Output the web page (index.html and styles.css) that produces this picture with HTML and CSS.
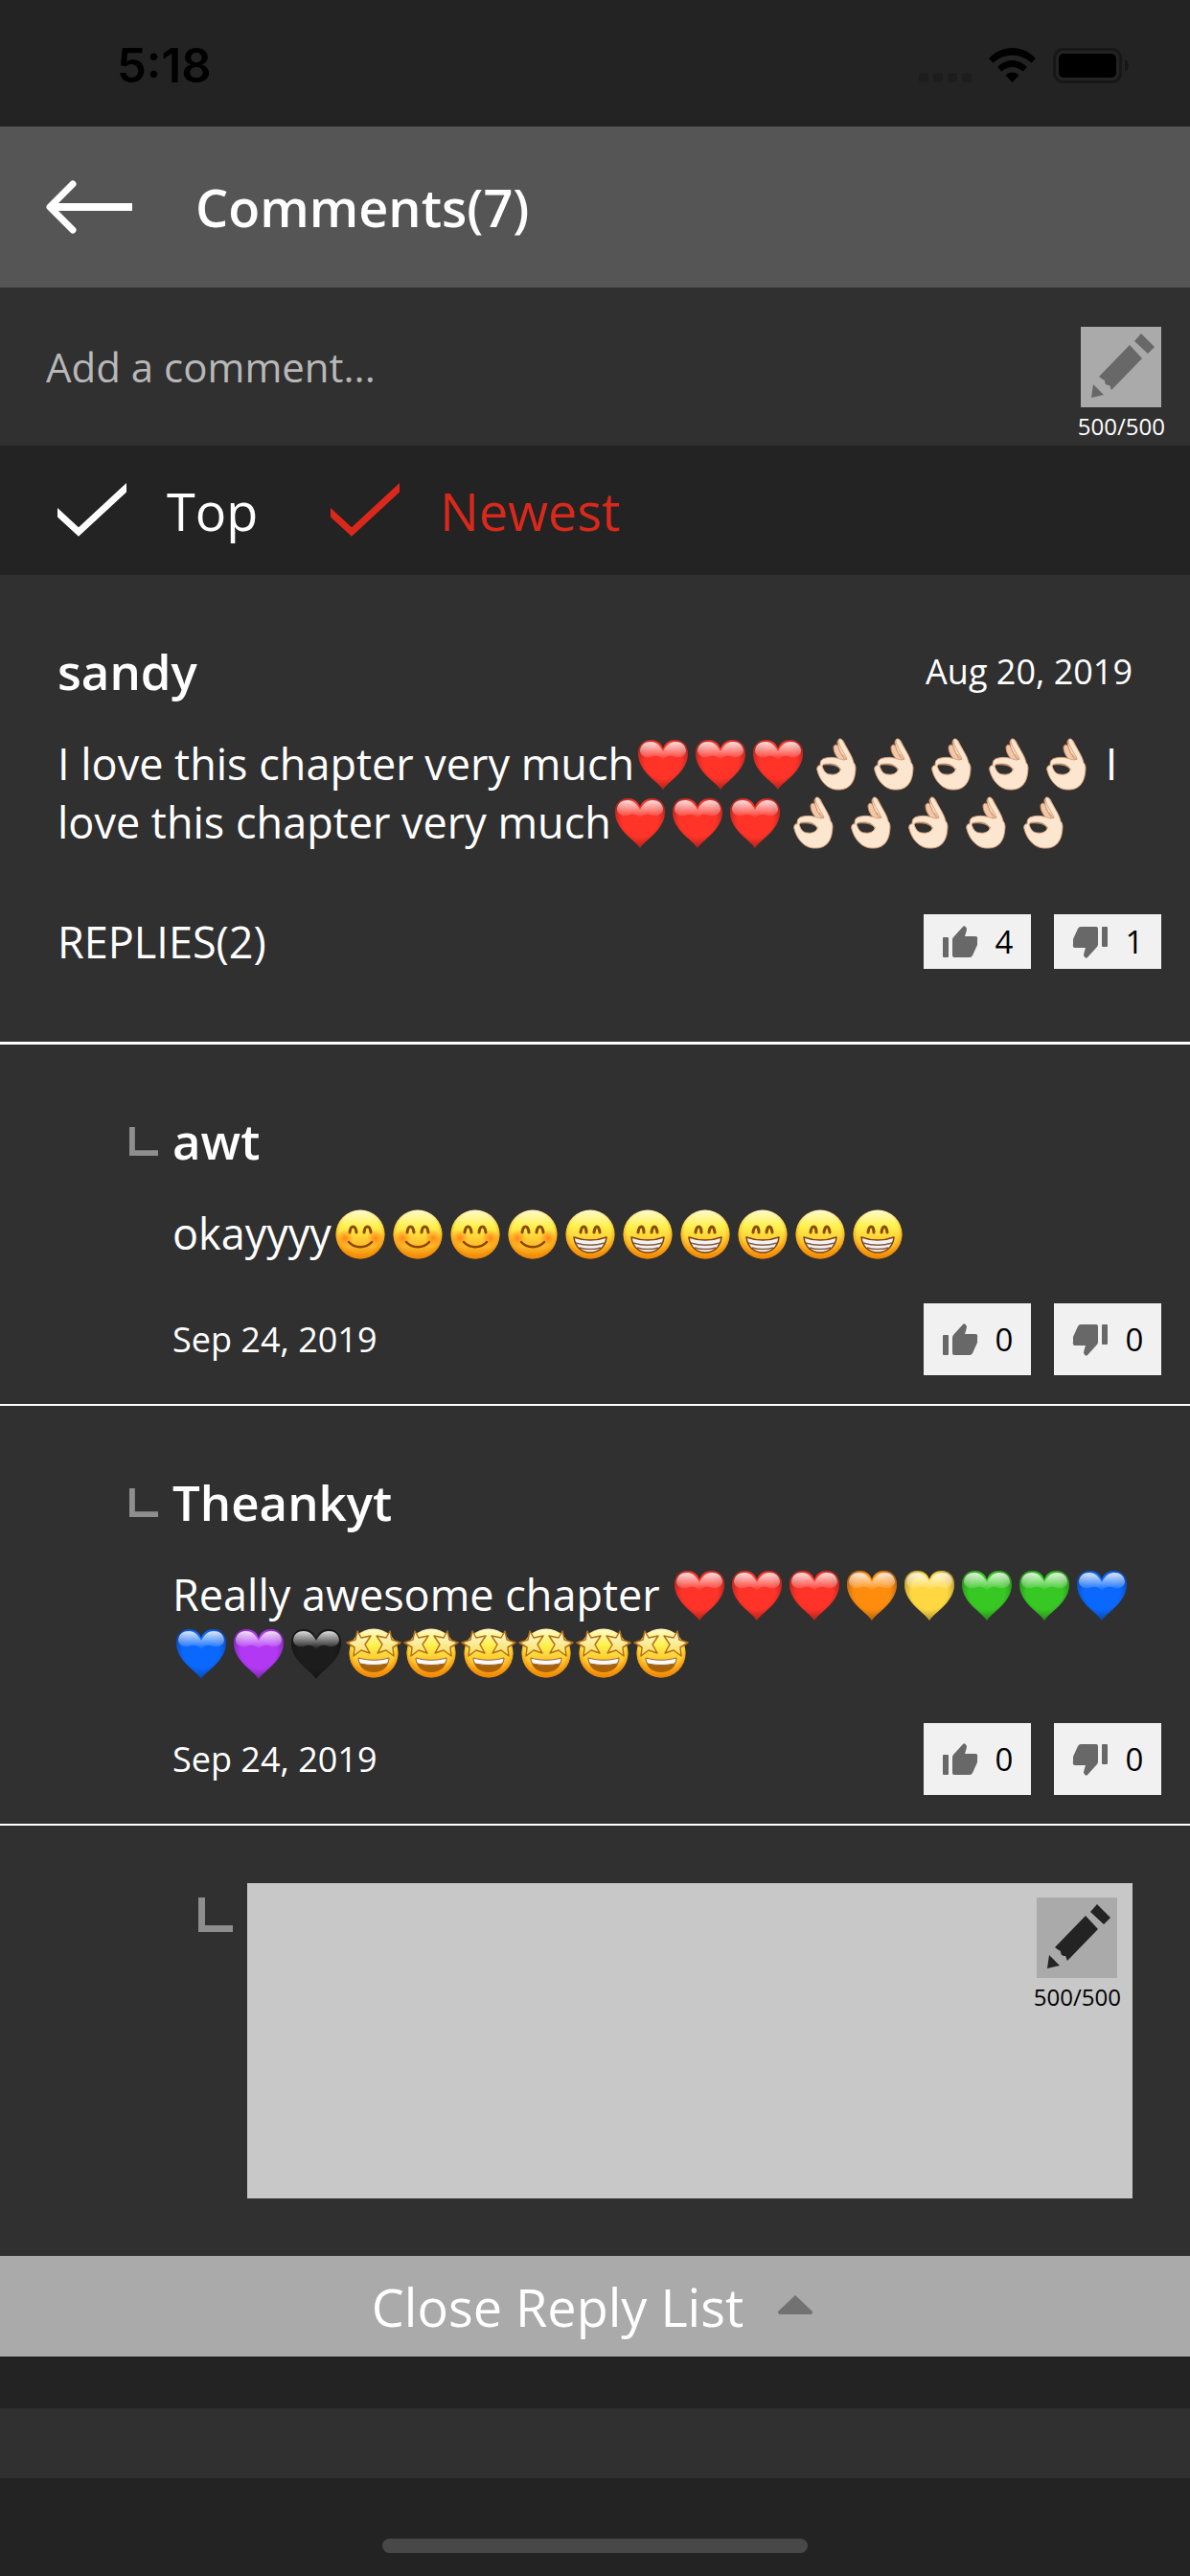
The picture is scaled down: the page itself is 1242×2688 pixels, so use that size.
FILE: index.html
```html
<!DOCTYPE html>
<html lang="en">
<head>
<meta charset="utf-8">
<meta name="viewport" content="width=device-width, initial-scale=1">
<title>Comments</title>
<link rel="stylesheet" href="styles.css">
</head>
<body>
<svg class="sprite" aria-hidden="true">
  <defs>
    <linearGradient id="gloss" x1="0" y1="0" x2="0" y2="1"><stop offset="0" stop-color="#fff" stop-opacity=".85"/><stop offset="1" stop-color="#fff" stop-opacity="0"/></linearGradient>
    <radialGradient id="heartShade" cx=".5" cy=".42" r=".6"><stop offset=".6" stop-color="#000" stop-opacity="0"/><stop offset="1" stop-color="#000" stop-opacity=".35"/></radialGradient>
    <linearGradient id="face" x1="0" y1="0" x2="0" y2="1"><stop offset="0" stop-color="#fffbd0"/><stop offset=".35" stop-color="#fff04a"/><stop offset=".7" stop-color="#ffc02c"/><stop offset="1" stop-color="#f08a08"/></linearGradient>
    <radialGradient id="faceEdge" cx=".5" cy=".45" r=".56"><stop offset=".75" stop-color="#f58a00" stop-opacity="0"/><stop offset="1" stop-color="#ef8500" stop-opacity=".85"/></radialGradient>
    <radialGradient id="blush"><stop offset="0" stop-color="#ff7a10" stop-opacity=".85"/><stop offset="1" stop-color="#ff7a10" stop-opacity="0"/></radialGradient>
    <linearGradient id="star" x1="0" y1="0" x2="0" y2="1"><stop offset="0" stop-color="#fffbd8"/><stop offset="1" stop-color="#f7dc58"/></linearGradient>
  </defs>
  <symbol id="heart" viewBox="0 0 60 61">
    <path fill="currentColor" d="M30 58C26 50 4 40 4 20C4 11 10 6 17 6C23 6 28 9 30 15C32 9 37 6 43 6C50 6 56 11 56 20C56 40 34 50 30 58Z"/>
    <path fill="url(#heartShade)" d="M30 58C26 50 4 40 4 20C4 11 10 6 17 6C23 6 28 9 30 15C32 9 37 6 43 6C50 6 56 11 56 20C56 40 34 50 30 58Z"/>
    <path fill="url(#gloss)" d="M6 17C7 11 11 8 17 8C23 8 27 12 30 18C33 12 37 8 43 8C49 8 53 11 54 17C54 24 46 25 43 24C38 22 34 22 30 27C26 22 22 22 17 24C14 25 6 24 6 17Z"/>
  </symbol>
  <symbol id="hand" viewBox="0 0 60 61">
    <path fill="#f2c9a8" stroke="#c98a66" stroke-width="1" d="M28 14C28 11 31 10 33 13L43 27L36 29C31 24 28 19 28 14Z"/>
    <path fill="#f9dcc0" stroke="#c98a66" stroke-width="1" d="M32 8C33 4 38 5 39 9L47 25L40 27C35 20 32 13 32 8Z"/>
    <path fill="#fde6cf" stroke="#d8a27c" stroke-width="1" fill-rule="evenodd" d="M33 6C34 4 37 5 38 8C42 15 48 24 49 30C52 33 51 38 50 44C48 53 42 58 34 58C23 59 14 50 11 38C10 35 12 32 14 33C14 28 15 26 20 25C28 23 33 26 39 27L42 26C39 19 33 12 33 6ZM16 33C18 40 21 42 25 42C30 43 35 40 35 37C33 33 29 31 24 31C20 31 17 31 16 33Z"/>
    <path fill="none" stroke="#d49c74" stroke-width="1" d="M36 37C32 33 27 31 17 32M42 27L37 21"/>
  </symbol>
  <symbol id="smile" viewBox="0 0 60 61">
    <circle cx="30" cy="32" r="25.500" fill="url(#face)"/><circle cx="30" cy="32" r="25.500" fill="url(#faceEdge)"/>
    <circle cx="14" cy="36" r="9" fill="url(#blush)"/><circle cx="46" cy="36" r="9" fill="url(#blush)"/>
    <path fill="none" stroke="#8a4a00" stroke-width="3" stroke-linecap="round" d="M19 30C20 22 25 22 26 30M34 30C35 22 40 22 41 30"/>
    <path fill="none" stroke="#8a4500" stroke-width="2.500" stroke-linecap="round" d="M18 40C24 47 36 47 42 40"/>
  </symbol>
  <symbol id="grin" viewBox="0 0 60 61">
    <circle cx="30" cy="32" r="25.500" fill="url(#face)"/><circle cx="30" cy="32" r="25.500" fill="url(#faceEdge)"/>
    <path fill="none" stroke="#8a4a00" stroke-width="3" stroke-linecap="round" d="M20 30C21 22 26 22 26 30M34 30C35 22 39 22 40 30"/>
    <path fill="#f2f2f6" stroke="#7a4210" stroke-width="1.500" stroke-linejoin="round" d="M13 35C24 39 36 39 47 35C46 45 39 51 30 51C21 51 14 45 13 35Z"/>
    <path fill="none" stroke="#8a5a38" stroke-width="1.500" d="M15 41C25 44 35 44 45 41M19 46C26 48 34 48 41 46"/>
  </symbol>
  <symbol id="starstruck" viewBox="0 0 60 61">
    <circle cx="30" cy="31" r="25.500" fill="url(#face)"/><circle cx="30" cy="31" r="25.500" fill="url(#faceEdge)"/>
    <path fill="#a96208" d="M14 38C25 41 35 41 46 38C45 46 39 51 30 51C21 51 15 46 14 38Z"/>
    <path fill="#fafafa" stroke="#98642c" stroke-width="1" d="M14 36C25 39 35 39 46 36C46 39 45 41 44 42C35 44 25 44 16 42C15 41 14 39 14 36Z"/>
    <path fill="url(#star)" stroke="#b56f16" stroke-width="1.500" stroke-linejoin="round" d="M13 8L17 15L27 13L21 22L26 31L17 28L9 34L10 25L2 20L11 17Z"/>
    <path fill="url(#star)" stroke="#b56f16" stroke-width="1.500" stroke-linejoin="round" d="M47 8L43 15L33 13L39 22L34 31L43 28L51 34L50 25L58 20L49 17Z"/>
  </symbol>
  <symbol id="pencil" viewBox="0 0 84 84">
    <path fill="currentColor" d="M56 15L63 7L77 21L70 28ZM51 19L64 33L32 66C31 64 31 63 30 61C26 61 25 59 25 56C22 55 21 53 19 52ZM13 60L24 71L11 74Z"/>
  </symbol>
  <symbol id="thumb" viewBox="0 0 38 34">
    <path fill="currentColor" d="M1 13Q1 12 2 12H6Q7 12 7 13V32Q7 33 6 33H2Q1 33 1 32ZM11 15Q11 13 12 12L22 1Q24 -1 26 3Q26 5 24 11H35Q38 11 37 15V20L32 31Q31 33 29 33H13Q11 33 11 31Z"/>
  </symbol>
  <symbol id="thumb-down" viewBox="0 0 38 34">
    <path fill="currentColor" d="M37 21Q37 22 36 22H32Q31 22 31 21V2Q31 1 32 1H36Q37 1 37 2ZM27 19Q27 21 26 22L16 33Q14 35 12 31Q12 29 14 23H3Q0 23 1 19V14L6 3Q7 1 9 1H25Q27 1 27 3Z"/>
  </symbol>
  <symbol id="corner" viewBox="0 0 36 36"><path fill="currentColor" d="M0 0H7V29H36V36H0Z"/></symbol>
  <symbol id="check" viewBox="0 0 72 64"><path fill="none" stroke="currentColor" stroke-width="7" d="M-4 30L22 54L76 4"/></symbol>
</svg>

<div class="status-bar">
  <span class="clock">5:18</span>
  <div class="status-icons">
    <svg width="55" height="36" viewBox="0 0 55 36" aria-hidden="true"><g fill="#1d1d1d"><rect y="26" width="10" height="10" rx="3"/><rect x="15" y="26" width="10" height="10" rx="3"/><rect x="30" y="26" width="10" height="10" rx="3"/><rect x="45" y="26" width="10" height="10" rx="3"/></g></svg>
    <svg width="49" height="36" viewBox="0 0 49 36" aria-hidden="true"><path d="M0 11C14 -3.600 35 -3.600 49 11L44.500 15.500C33 5 16 5 4.500 15.500ZM9 20C18 10.500 31 10.500 40 20L35.500 24.500C29 18.500 20 18.500 13.500 24.500ZM17.500 28.500C21 24.500 28 24.500 31.500 28.500L24.500 36Z"/></svg>
    <svg width="79" height="37" viewBox="0 0 79 37" aria-hidden="true"><rect x="1.500" y="1.500" width="69" height="34" rx="9" fill="none" stroke="#171717" stroke-width="3"/><rect x="6" y="6" width="60" height="25" rx="5"/><path fill="#171717" d="M75 12C80 14 80 23 75 25Z"/></svg>
  </div>
</div>

<header class="header">
  <button class="back" type="button" aria-label="Back"><svg width="90" height="60" viewBox="0 0 90 60"><path fill="none" stroke="#fff" stroke-width="7" stroke-linecap="round" stroke-linejoin="round" d="M28 6L4 30L28 54"/><path stroke="#fff" stroke-width="8" d="M4 30H90"/></svg></button>
  <h1 class="title">Comments(7)</h1>
</header>

<main>
  <form class="composer">
    <input class="composer-input" type="text" placeholder="Add a comment..." aria-label="Add a comment">
    <div class="submit">
      <button class="edit" type="button" aria-label="Post comment"><svg width="84" height="84"><use href="#pencil"/></svg></button>
      <span class="limit">500/500</span>
    </div>
  </form>

  <nav class="sort" aria-label="Sort comments">
    <button class="sort-option" type="button"><svg width="72" height="64" aria-hidden="true"><use href="#check"/></svg>Top</button>
    <button class="sort-option active" type="button" aria-pressed="true"><svg width="72" height="64" aria-hidden="true"><use href="#check"/></svg>Newest</button>
  </nav>

  <article class="comment">
    <div class="comment-head"><h2 class="name">sandy</h2><time class="date" datetime="2019-08-20">Aug 20, 2019</time></div>
    <p class="text">I love this chapter very much<svg class="emoji red"><use href="#heart"/></svg><svg class="emoji red"><use href="#heart"/></svg><svg class="emoji red"><use href="#heart"/></svg><svg class="emoji"><use href="#hand"/></svg><svg class="emoji"><use href="#hand"/></svg><svg class="emoji"><use href="#hand"/></svg><svg class="emoji"><use href="#hand"/></svg><svg class="emoji"><use href="#hand"/></svg> I love this chapter very much<svg class="emoji red"><use href="#heart"/></svg><svg class="emoji red"><use href="#heart"/></svg><svg class="emoji red"><use href="#heart"/></svg><svg class="emoji"><use href="#hand"/></svg><svg class="emoji"><use href="#hand"/></svg><svg class="emoji"><use href="#hand"/></svg><svg class="emoji"><use href="#hand"/></svg><svg class="emoji"><use href="#hand"/></svg></p>
    <div class="comment-foot">
      <button class="replies" type="button">REPLIES(2)</button>
      <div class="votes">
        <button class="vote" type="button" aria-label="Like, 4"><svg width="38" height="34"><use href="#thumb"/></svg>4</button>
        <button class="vote" type="button" aria-label="Dislike, 1"><svg width="38" height="34"><use href="#thumb-down"/></svg>1</button>
      </div>
    </div>
  </article>

  <article class="reply">
    <svg class="corner" width="30" height="30" aria-hidden="true"><use href="#corner"/></svg>
    <h2 class="name">awt</h2>
    <p class="text">okayyyy<svg class="emoji"><use href="#smile"/></svg><svg class="emoji"><use href="#smile"/></svg><svg class="emoji"><use href="#smile"/></svg><svg class="emoji"><use href="#smile"/></svg><svg class="emoji"><use href="#grin"/></svg><svg class="emoji"><use href="#grin"/></svg><svg class="emoji"><use href="#grin"/></svg><svg class="emoji"><use href="#grin"/></svg><svg class="emoji"><use href="#grin"/></svg><svg class="emoji"><use href="#grin"/></svg></p>
    <div class="reply-foot">
      <time class="date" datetime="2019-09-24">Sep 24, 2019</time>
      <div class="votes">
        <button class="vote tall" type="button" aria-label="Like, 0"><svg width="38" height="34"><use href="#thumb"/></svg>0</button>
        <button class="vote tall" type="button" aria-label="Dislike, 0"><svg width="38" height="34"><use href="#thumb-down"/></svg>0</button>
      </div>
    </div>
  </article>

  <article class="reply">
    <svg class="corner" width="30" height="30" aria-hidden="true"><use href="#corner"/></svg>
    <h2 class="name">Theankyt</h2>
    <p class="text">Really awesome chapter <svg class="emoji red"><use href="#heart"/></svg><svg class="emoji red"><use href="#heart"/></svg><svg class="emoji red"><use href="#heart"/></svg><svg class="emoji orange"><use href="#heart"/></svg><svg class="emoji yellow"><use href="#heart"/></svg><svg class="emoji green"><use href="#heart"/></svg><svg class="emoji green"><use href="#heart"/></svg><svg class="emoji blue"><use href="#heart"/></svg><svg class="emoji blue"><use href="#heart"/></svg><svg class="emoji purple"><use href="#heart"/></svg><svg class="emoji black"><use href="#heart"/></svg><svg class="emoji"><use href="#starstruck"/></svg><svg class="emoji"><use href="#starstruck"/></svg><svg class="emoji"><use href="#starstruck"/></svg><svg class="emoji"><use href="#starstruck"/></svg><svg class="emoji"><use href="#starstruck"/></svg><svg class="emoji"><use href="#starstruck"/></svg></p>
    <div class="reply-foot">
      <time class="date" datetime="2019-09-24">Sep 24, 2019</time>
      <div class="votes">
        <button class="vote tall" type="button" aria-label="Like, 0"><svg width="38" height="34"><use href="#thumb"/></svg>0</button>
        <button class="vote tall" type="button" aria-label="Dislike, 0"><svg width="38" height="34"><use href="#thumb-down"/></svg>0</button>
      </div>
    </div>
  </article>

  <form class="reply-form">
    <svg class="form-corner" width="36" height="36" aria-hidden="true"><use href="#corner"/></svg>
    <div class="reply-box">
      <textarea class="reply-input" aria-label="Write a reply"></textarea>
      <div class="submit dark">
        <button class="edit" type="button" aria-label="Post reply"><svg width="84" height="84"><use href="#pencil"/></svg></button>
        <span class="limit">500/500</span>
      </div>
    </div>
  </form>

  <button class="close-list" type="button">Close Reply List<svg width="48" height="24" viewBox="0 0 48 24" aria-hidden="true"><path fill="#727272" d="M24 0L42 17Q42 20 40 20H8Q6 20 6 17Z"/></svg></button>
  <div class="next-comment"></div>
</main>

<footer class="home"><div class="home-bar"></div></footer>
</body>
</html>
```
FILE: styles.css
```css
* { box-sizing: border-box; }

body {
  margin: 0;
  background: #232323;
  color: #fff;
  font-family: "Open Sans", sans-serif;
  font-size: 45px;
  line-height: 61px;
}

h1, h2, p { margin: 0; }
svg { display: block; flex: none; }
.sprite { position: absolute; width: 0; height: 0; }

button, input, textarea {
  margin: 0;
  padding: 0;
  border: 0;
  background: none;
  color: inherit;
  font: inherit;
  cursor: pointer;
}

/* Status bar */
.status-bar {
  display: flex;
  align-items: center;
  justify-content: space-between;
  height: 132px;
  padding: 4px 64px 0 122px;
  color: #000;
}
.clock { font-family: Inter, sans-serif; font-size: 49px; font-weight: 600; }
.status-icons { display: flex; gap: 18px; }

/* Header */
.header {
  display: flex;
  align-items: center;
  gap: 66px;
  height: 168px;
  padding: 0 48px;
  background: #555;
}
.title { font-size: 54px; line-height: 74px; font-weight: 600; }

/* New comment */
.composer {
  display: flex;
  align-items: center;
  justify-content: space-between;
  padding: 41px 26px 4px 48px;
  background: #303030;
}
.composer-input {
  flex: 1;
  min-width: 0;
  margin-bottom: 38px;
  font-size: 42px;
  line-height: 57px;
  outline: 0;
}
.composer-input::placeholder { color: #b8b8b8; opacity: 1; }

.submit {
  display: flex;
  flex-direction: column;
  align-items: center;
  gap: 3px;
}
.edit { width: 84px; height: 84px; background: #aaa; color: #686868; }
.limit { font-size: 24px; line-height: 33px; }
.dark .edit { color: #232323; }
.dark .limit { color: #000; }

/* Sorting */
.sort {
  display: flex;
  align-items: center;
  gap: 76px;
  height: 135px;
  padding: 0 60px;
}
.sort-option {
  display: flex;
  align-items: center;
  gap: 42px;
  font-size: 54px;
  line-height: 74px;
}
.active { color: #da291c; }

/* Comments */
.name { font-size: 51px; line-height: 69px; font-weight: 600; }
.date { font-size: 36px; line-height: 49px; }
.emoji { display: inline-block; width: 60px; height: 61px; vertical-align: top; }
.red { color: #ff3328; }
.orange { color: #ff8c0c; }
.yellow { color: #ffd740; }
.green { color: #38c824; }
.blue { color: #0a68ff; }
.purple { color: #b238f4; }
.black { color: #1c1c1c; }

.comment {
  padding: 66px 60px 74px;
  background: #303030;
  border-bottom: 3px solid #fff;
}
.comment-head {
  display: flex;
  align-items: center;
  justify-content: space-between;
  margin-bottom: 31px;
}
.comment-foot {
  display: flex;
  align-items: center;
  justify-content: space-between;
  margin: 64px -30px 0 0;
}

.votes { display: flex; gap: 24px; }
.vote {
  display: flex;
  align-items: center;
  justify-content: center;
  gap: 18px;
  width: 112px;
  height: 57px;
  background: #f1f1f1;
  color: #000;
  font-size: 33px;
  line-height: 45px;
}
.vote svg { color: #686868; }
.tall { height: 75px; }

.reply {
  display: grid;
  grid-template-columns: 30px 1fr;
  column-gap: 15px;
  align-items: center;
  padding: 66px 60px 30px 135px;
  background: #303030;
  border-bottom: 2px solid #fff;
}
.corner, .form-corner { color: #8e8e8e; }
.reply .text, .reply-foot { grid-column: 2; }
.reply .text { margin-top: 31px; }
.reply-foot {
  display: flex;
  align-items: center;
  justify-content: space-between;
  margin: 43px -30px 0 0;
}

/* Reply form */
.reply-form {
  display: flex;
  gap: 15px;
  padding: 60px 60px 60px 207px;
  background: #303030;
}
.form-corner { margin-top: 15px; }
.reply-box {
  display: flex;
  align-items: flex-start;
  flex: 1;
  height: 329px;
  padding: 15px 12px 15px 24px;
  background: #c8c8c8;
}
.reply-input {
  flex: 1;
  min-width: 0;
  height: 100%;
  color: #000;
  outline: 0;
  resize: none;
}

.close-list {
  display: flex;
  align-items: center;
  justify-content: center;
  gap: 30px;
  width: 100%;
  height: 105px;
  background: #aaa;
  font-size: 54px;
  line-height: 74px;
}
.next-comment { height: 73px; margin-top: 54px; background: #303030; }

.home { padding: 63px 0 24px; }
.home-bar {
  width: 444px;
  max-width: 60%;
  height: 15px;
  margin: 0 auto;
  border-radius: 8px;
  background: #484848;
}
```
